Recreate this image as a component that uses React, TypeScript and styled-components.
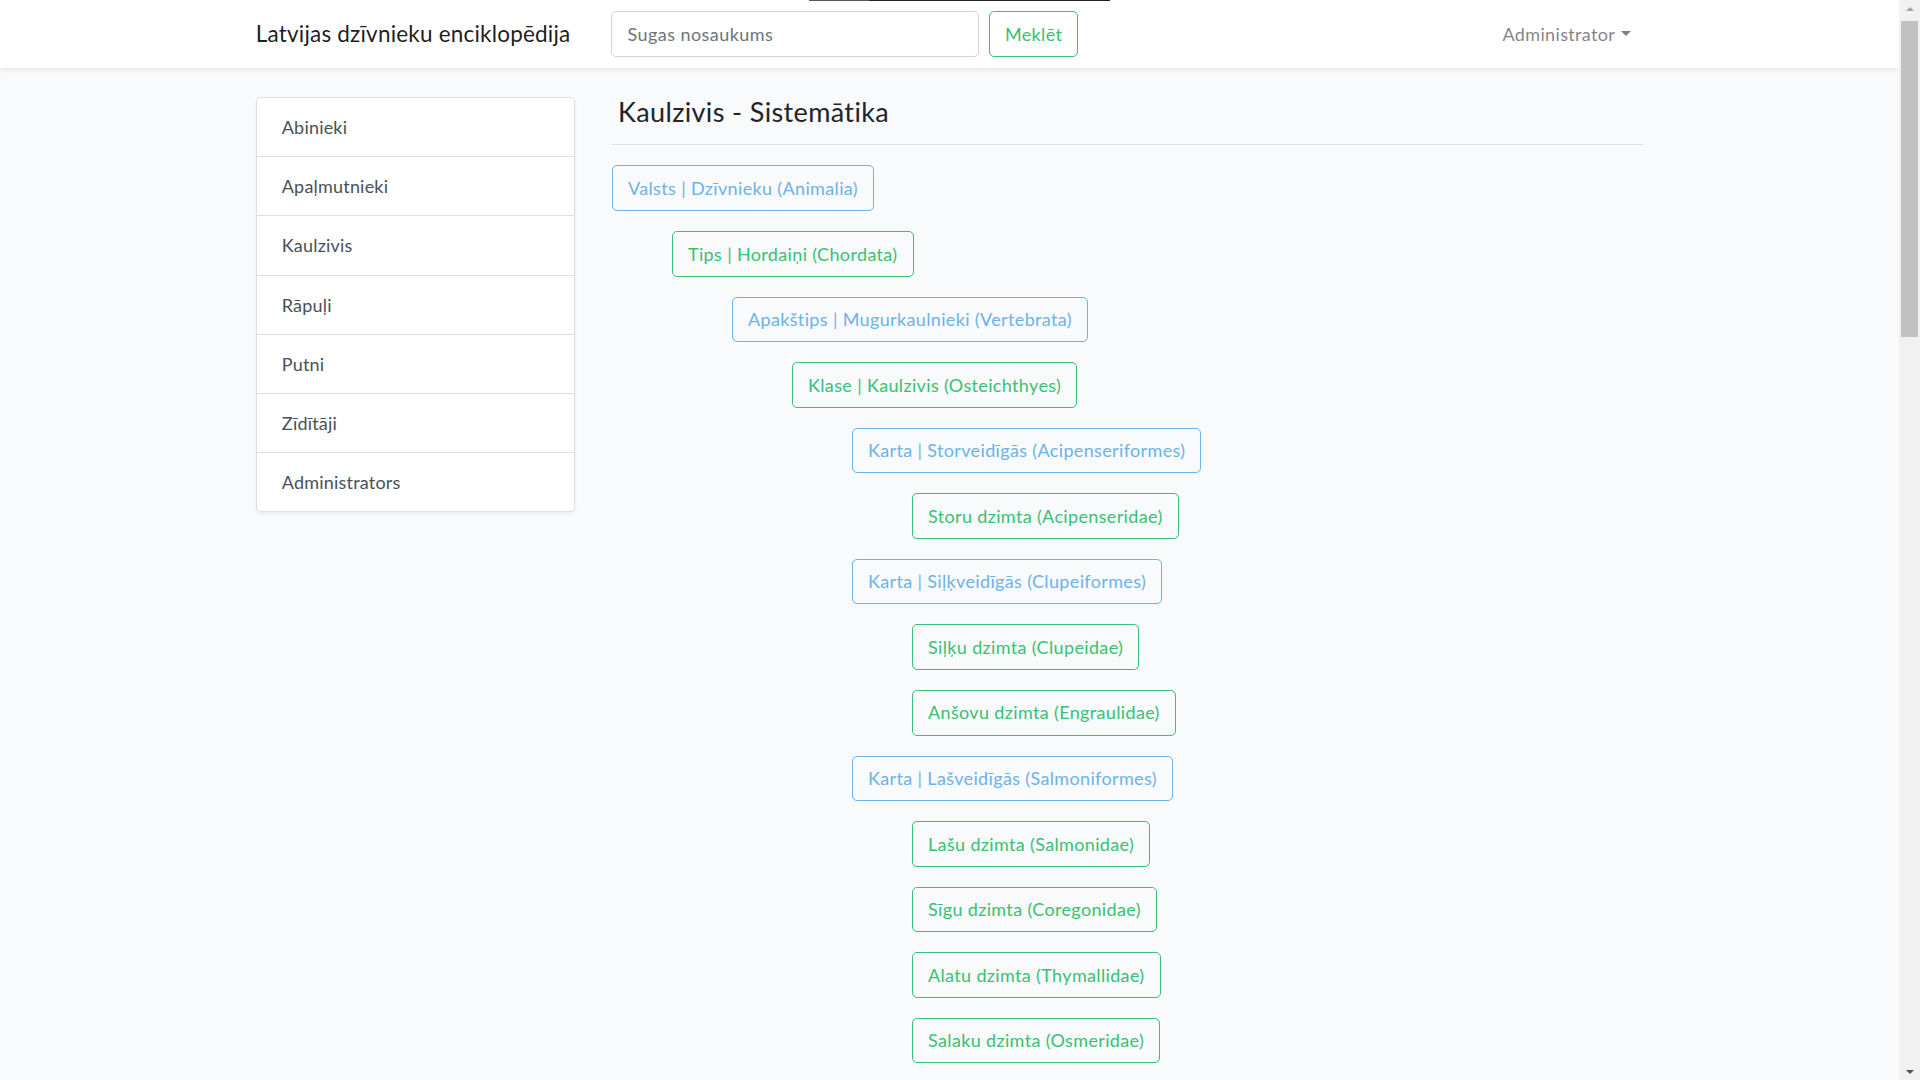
import React from "react";
import styled, { createGlobalStyle } from "styled-components";

const GlobalStyle = createGlobalStyle`
  html, body {
    margin: 0;
    padding: 0;
    height: 100%;
    overflow: hidden;
    background: #f8fafc;
  }
  body {
    font-family: Lato, "Noto Sans", sans-serif;
    font-size: 18px;
    line-height: 1.6;
    color: #212529;
    letter-spacing: 0.3px;
  }
  * { box-sizing: border-box; }
`;

const Page = styled.div`
  display: flex;
  height: 100vh;
  width: 100vw;
`;

const Viewport = styled.div`
  flex: 1;
  position: relative;
  overflow: hidden;
  background: #f8fafc;
`;

const TopLine = styled.div`
  position: absolute;
  top: 0;
  left: 809px;
  width: 301px;
  height: 1px;
  display: flex;
  z-index: 5;
`;

const TopLineSeg = styled.div<{ $w: number; $c: string }>`
  width: ${(p) => p.$w}px;
  background: ${(p) => p.$c};
`;

const Navbar = styled.nav`
  position: relative;
  z-index: 2;
  height: 68px;
  background: #fff;
  box-shadow: 0 2.5px 5px rgba(0, 0, 0, 0.075);
`;

const Container = styled.div`
  max-width: 1425px;
  margin: 0 auto;
  padding: 0 18.75px;
`;

const NavInner = styled(Container)`
  height: 100%;
  display: flex;
  align-items: center;
`;

const Brand = styled.a`
  font-size: 22.5px;
  letter-spacing: 0.2px;
  color: rgba(0, 0, 0, 0.9);
  text-decoration: none;
  margin-right: 41px;
  line-height: 1.6;
  white-space: nowrap;
`;

const SearchForm = styled.form`
  display: flex;
  align-items: center;
  gap: 10px;
`;

const SearchInput = styled.input`
  width: 367.5px;
  height: 46px;
  padding: 7.5px 15px;
  font-family: inherit;
  font-size: 18px;
  letter-spacing: 0.45px;
  color: #495057;
  background: #fff;
  border: 1px solid #ced4da;
  border-radius: 5px;
  outline: none;
  &::placeholder {
    color: #6c757d;
  }
`;

const OutlineButton = styled.button<{ $tone: "info" | "success" }>`
  display: inline-block;
  font-family: inherit;
  font-size: 18px;
  letter-spacing: 0.35px;
  line-height: 28.56px;
  padding: 7.5px 15px;
  border-radius: 5px;
  background: transparent;
  white-space: nowrap;
  cursor: pointer;
  color: ${(p) => (p.$tone === "info" ? "#6cb2eb" : "#38c172")};
  border: 1px solid ${(p) => (p.$tone === "info" ? "#6cb2eb" : "#38c172")};
`;

const Spacer = styled.div`
  flex: 1;
`;

const UserMenu = styled.a`
  display: flex;
  align-items: center;
  padding: 0 12px 0 10px;
  color: rgba(0, 0, 0, 0.5);
  font-size: 18px;
  letter-spacing: 0.35px;
  text-decoration: none;
  white-space: nowrap;
  &::after {
    content: "";
    margin-left: 6px;
    border-top: 5.4px solid rgba(0, 0, 0, 0.5);
    border-left: 5.4px solid transparent;
    border-right: 5.4px solid transparent;
  }
`;

const Main = styled(Container)`
  padding-top: 29px;
`;

const Row = styled.div`
  display: flex;
  margin: 0 -18.75px;
`;

const SideCol = styled.div`
  width: 356.25px;
  flex: none;
  padding: 0 18.75px;
`;

const ContentCol = styled.div`
  flex: 1;
  min-width: 0;
  padding: 0 18.75px;
`;

const ListGroup = styled.div`
  display: flex;
  flex-direction: column;
  background: #fff;
  border: 1px solid rgba(0, 0, 0, 0.125);
  border-radius: 5px;
  box-shadow: 0 2px 4px rgba(0, 0, 0, 0.06);
  overflow: hidden;
`;

const ListItem = styled.a`
  display: block;
  padding: 15px 25px;
  line-height: 28.2px;
  color: #495057;
  font-size: 18px;
  letter-spacing: 0.2px;
  text-decoration: none;
  & + & {
    border-top: 1px solid rgba(0, 0, 0, 0.125);
  }
`;

const Title = styled.h4`
  margin: 0 0 17.8px 6px;
  font-size: 27px;
  letter-spacing: 0.37px;
  font-weight: 400;
  line-height: 1.1;
  color: #212529;
`;

const Divider = styled.hr`
  margin: 0 0 20px;
  border: 0;
  border-top: 1px solid rgba(0, 0, 0, 0.1);
`;

const Tree = styled.div`
  display: flex;
  flex-direction: column;
  align-items: flex-start;
  gap: 20px;
`;

const TreeNode = styled(OutlineButton)<{ $level: number }>`
  margin-left: ${(p) => p.$level * 60}px;
`;

const Scrollbar = styled.div`
  width: 21px;
  flex: none;
  background: #f1f1f1;
  display: flex;
  flex-direction: column;
  align-items: center;
  padding: 0 2px;
`;

const ScrollArrow = styled.div<{ $down?: boolean }>`
  width: 100%;
  height: 17px;
  display: flex;
  align-items: center;
  justify-content: center;
  &::before {
    content: "";
    border-left: 4px solid transparent;
    border-right: 4px solid transparent;
    ${(p) =>
      p.$down
        ? "border-top: 4px solid #505050;"
        : "border-bottom: 4px solid #a3a3a3;"}
  }
`;

const ScrollTrack = styled.div`
  flex: 1;
  width: 100%;
  padding-top: 4px;
`;

const ScrollThumb = styled.div`
  width: 100%;
  height: 316px;
  background: #c1c1c1;
`;

const categories = [
  "Abinieki",
  "Apaļmutnieki",
  "Kaulzivis",
  "Rāpuļi",
  "Putni",
  "Zīdītāji",
  "Administrators",
];

type Node = { label: string; level: number; tone: "info" | "success" };

const nodes: Node[] = [
  { label: "Valsts | Dzīvnieku (Animalia)", level: 0, tone: "info" },
  { label: "Tips | Hordaiņi (Chordata)", level: 1, tone: "success" },
  { label: "Apakštips | Mugurkaulnieki (Vertebrata)", level: 2, tone: "info" },
  { label: "Klase | Kaulzivis (Osteichthyes)", level: 3, tone: "success" },
  { label: "Karta | Storveidīgās (Acipenseriformes)", level: 4, tone: "info" },
  { label: "Storu dzimta (Acipenseridae)", level: 5, tone: "success" },
  { label: "Karta | Siļķveidīgās (Clupeiformes)", level: 4, tone: "info" },
  { label: "Siļķu dzimta (Clupeidae)", level: 5, tone: "success" },
  { label: "Anšovu dzimta (Engraulidae)", level: 5, tone: "success" },
  { label: "Karta | Lašveidīgās (Salmoniformes)", level: 4, tone: "info" },
  { label: "Lašu dzimta (Salmonidae)", level: 5, tone: "success" },
  { label: "Sīgu dzimta (Coregonidae)", level: 5, tone: "success" },
  { label: "Alatu dzimta (Thymallidae)", level: 5, tone: "success" },
  { label: "Salaku dzimta (Osmeridae)", level: 5, tone: "success" },
];

export default function App() {
  return (
    <>
      <GlobalStyle />
      <Page>
        <Viewport>
          <TopLine>
            <TopLineSeg $w={60} $c="#555" />
            <TopLineSeg $w={241} $c="#222" />
          </TopLine>
          <Navbar>
            <NavInner>
              <Brand href="#">Latvijas dzīvnieku enciklopēdija</Brand>
              <SearchForm onSubmit={(e) => e.preventDefault()}>
                <SearchInput placeholder="Sugas nosaukums" />
                <OutlineButton $tone="success" type="submit">
                  Meklēt
                </OutlineButton>
              </SearchForm>
              <Spacer />
              <UserMenu href="#">Administrator</UserMenu>
            </NavInner>
          </Navbar>
          <Main>
            <Row>
              <SideCol>
                <ListGroup>
                  {categories.map((c) => (
                    <ListItem key={c} href="#">
                      {c}
                    </ListItem>
                  ))}
                </ListGroup>
              </SideCol>
              <ContentCol>
                <Title>Kaulzivis - Sistemātika</Title>
                <Divider />
                <Tree>
                  {nodes.map((n, i) => (
                    <TreeNode key={i} $level={n.level} $tone={n.tone}>
                      {n.label}
                    </TreeNode>
                  ))}
                </Tree>
              </ContentCol>
            </Row>
          </Main>
        </Viewport>
        <Scrollbar>
          <ScrollArrow />
          <ScrollTrack>
            <ScrollThumb />
          </ScrollTrack>
          <ScrollArrow $down />
        </Scrollbar>
      </Page>
    </>
  );
}
